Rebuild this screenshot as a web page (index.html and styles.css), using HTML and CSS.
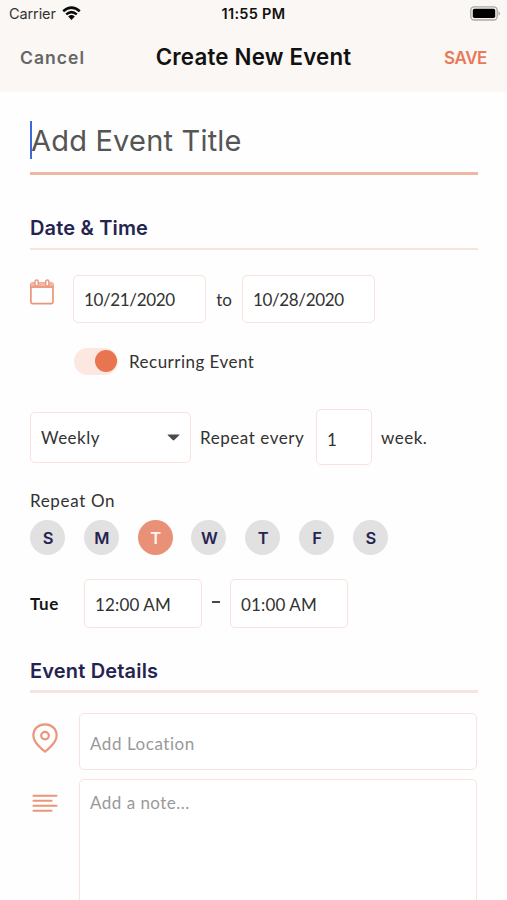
FILE: index.html
```html
<!DOCTYPE html>
<html lang="en">
<head>
<meta charset="utf-8">
<meta name="viewport" content="width=device-width, initial-scale=1">
<title>Create New Event</title>
<link rel="stylesheet" href="styles.css">
</head>
<body>
<div class="screen">
  <header class="header">
    <div class="status">
      <div class="carrier"><span class="carrier-name">Carrier</span>
        <svg class="wifi" width="19" height="15" viewBox="0 0 19 15" fill="none" stroke="#090909" stroke-width="2.5"><path d="M1.2 5.2Q9.5-1.9 17.8 5.2M4.2 8.4Q9.5 3.9 14.8 8.4"/><path fill="#090909" stroke="none" d="M6.2 10.4Q9.5 7.6 12.8 10.4L9.5 14Z"/></svg>
      </div>
      <span class="clock">11:55 PM</span>
      <svg class="battery" width="31" height="15" viewBox="0 0 31 15"><rect x=".8" y=".8" width="26.4" height="13.2" rx="3.5" fill="#f5f2ed" stroke="#aaa9a5" stroke-width="1.3"/><rect x="2.8" y="2.7" width="22.4" height="9.4" rx="1.8" fill="#000"/><path d="M28.5 5q3 2.4 0 4.8z" fill="#aaa9a5"/></svg>
    </div>
    <nav class="nav">
      <span class="cancel">Cancel</span>
      <h1 class="nav-title">Create New Event</h1>
      <span class="save">SAVE</span>
    </nav>
  </header>
  <main class="form">
    <div class="title-field"><span class="caret"></span><span class="title-text">Add Event Title</span></div>

    <h2 class="section date-section"><span class="date-heading">Date &amp; Time</span></h2>
    <div class="row date-row">
      <svg class="calendar" width="24" height="26" viewBox="0 0 24 26" fill="none" stroke="#ea967b" stroke-width="1.7"><rect x=".9" y="4" width="22.1" height="20.6" rx="1.5"/><path fill="#f2b8a4" stroke="none" d="M1 4h22v4H1z"/><path d="M1 8.1h22"/><rect x="5" y="1" width="3.2" height="6" rx="1.6" fill="#fff" stroke-width="1.4"/><rect x="15.7" y="1" width="3.2" height="6" rx="1.6" fill="#fff" stroke-width="1.4"/></svg>
      <div class="box date-box"><span class="date-text">10/21/2020</span></div>
      <span class="to">to</span>
      <div class="box date-box"><span class="date-text">10/28/2020</span></div>
    </div>
    <div class="row recurring">
      <span class="toggle"><span class="knob"></span></span>
      <span class="recurring-text">Recurring Event</span>
    </div>
    <div class="row repeat-row">
      <div class="box select"><span class="weekly">Weekly</span><svg width="13" height="7" viewBox="0 0 13 7"><path d="M1 .5h11q.8 0 .2.7L7.3 6q-.8.8-1.6 0L.8 1.2Q.2.5 1 .5z" fill="#4b4b4b"/></svg></div>
      <span class="every">Repeat every</span>
      <div class="box count"><span>1</span></div>
      <span class="week">week.</span>
    </div>
    <div class="repeat-on"><span class="repeat-text">Repeat On</span></div>
    <div class="days">
      <span class="day">S</span><span class="day">M</span><span class="day active">T</span><span class="day">W</span><span class="day">T</span><span class="day">F</span><span class="day">S</span>
    </div>
    <div class="row time-row">
      <span class="tue">Tue</span>
      <div class="box time-box"><span class="time-text">12:00 AM</span></div>
      <span class="dash"></span>
      <div class="box time-box"><span class="time-text">01:00 AM</span></div>
    </div>

    <h2 class="section detail-section"><span class="detail-heading">Event Details</span></h2>
    <div class="detail-row">
      <svg class="pin" width="26" height="30" viewBox="0 0 26 30" fill="none" stroke="#ea967b" stroke-width="2.2"><path d="M13 28.6C10.6 27 1.4 19.6 1.4 12.4 1.4 5.8 6.4 1.3 13 1.3s11.6 4.5 11.6 11.1c0 7.2-9.2 14.6-11.6 16.2z"/><circle cx="13" cy="12.6" r="3.8"/></svg>
      <div class="box location"><span class="location-text">Add Location</span></div>
    </div>
    <div class="detail-row note-row">
      <svg class="lines" width="26" height="19" viewBox="0 0 26 19" stroke="#ea967b" stroke-width="2.1" stroke-linecap="round"><path d="M1.5 1.7h23M1.5 6.7h18M1.5 11.7h23M1.5 16.7h18"/></svg>
      <div class="box note"><span class="note-text">Add a note...</span></div>
    </div>
  </main>
</div>
</body>
</html>
```

FILE: styles.css
```css
* { box-sizing: border-box; }
body { margin: 0; background: #fefefe; }
.screen { width: 507px; height: 900px; overflow: hidden; font-family: Lato, "Liberation Sans", sans-serif; font-size: 17px; color: #323232; white-space: nowrap; }
.header { height: 92px; background: #fbf7f4; }
.status { display: grid; grid-template-columns: 1fr auto 1fr; align-items: center; height: 27px; padding: 0 6px 0 9px; font: 14.5px Inter, sans-serif; }
.carrier { display: flex; align-items: center; gap: 6px; }
.carrier-name { letter-spacing: -.1px; }
.clock { margin-left: -3px; color: #111; font-weight: 600; letter-spacing: .3px; }
.battery { justify-self: end; }
.nav { display: grid; grid-template-columns: 1fr auto 1fr; align-items: center; height: 60px; padding: 0 20px; font-family: Inter, sans-serif; }
.nav-title { margin: 0; color: #111; font-size: 22.3px; font-weight: 600; line-height: 30px; letter-spacing: .2px; }
.cancel { padding-top: 1px; color: #666; font-size: 17.5px; font-weight: 600; letter-spacing: 1.05px; }
.save { justify-self: end; padding-top: 1px; color: #e7795a; font-size: 17px; font-weight: 600; letter-spacing: -.4px; }
.form { padding: 0 29px 0 30px; }
.title-field { display: flex; align-items: center; height: 83px; padding-top: 16px; border-bottom: 3px solid #edb7a4; color: #555; font: 29px Inter, sans-serif; }
.title-text { letter-spacing: .2px; }
.caret { width: 2px; height: 38px; margin-right: -1px; background: #3e68db; }
.section { display: flex; align-items: flex-end; margin: 0; color: #252450; font: 600 20px/30px Inter, sans-serif; letter-spacing: .17px; }
.date-section { height: 75px; padding-bottom: 5px; border-bottom: 2px solid #f9e2da; }
.row { display: flex; align-items: center; }
.box { display: flex; align-items: center; flex: none; border: 1px solid #fae2de; border-radius: 5px; background: #fff; }
.date-row { height: 49px; margin-top: 24px; }
.calendar { margin: -14px 19px 0 0; }
.date-box { width: 133px; height: 48px; padding: 2px 0 0 10px; }
.date-text { letter-spacing: -.35px; }
.to { width: 36px; padding-top: 1px; text-align: center; }
.recurring { height: 28px; margin-top: 24px; padding-left: 44px; gap: 11px; }
.recurring-text { letter-spacing: .48px; }
.toggle { display: flex; align-items: center; justify-content: flex-end; width: 44px; height: 27px; padding-right: 1px; border-radius: 14px; background: #fce8e1; }
.knob { width: 22px; height: 22px; border-radius: 50%; background: #e97450; }
.repeat-row { height: 56px; margin-top: 34px; }
.select { width: 161px; height: 51px; padding: 0 10px; justify-content: space-between; }
.weekly { letter-spacing: .5px; }
.every { width: 125px; padding-left: 9px; letter-spacing: .57px; }
.count { width: 56px; height: 56px; padding: 4px 0 0 10px; }
.week { padding-left: 9px; letter-spacing: .5px; }
.repeat-on { height: 26px; margin-top: 23px; line-height: 26px; letter-spacing: .65px; }
.days { display: flex; gap: 18.8px; margin-top: 6px; }
.day { display: grid; place-items: center; width: 35px; height: 35px; padding: 1px 0 0 1px; border-radius: 50%; background: #e1e1e1; color: #27254f; font: 600 16.5px Inter, sans-serif; }
.active { background: #e99177; color: #fff4ef; }
.time-row { height: 49px; margin-top: 24px; }
.tue { width: 54px; color: #161616; font-weight: 700; letter-spacing: .5px; }
.time-box { width: 118px; height: 49px; padding: 1px 0 0 10px; }
.time-text { letter-spacing: .15px; }
.dash { width: 8px; height: 2px; margin: -3px 10px 0; background: #494949; }
.detail-section { height: 65px; padding-bottom: 4px; border-bottom: 3px solid #f9e4dd; }
.detail-row { display: flex; align-items: flex-start; padding-left: 2px; margin-top: 20px; }
.pin { margin: 10px 21px 0 0; }
.location { width: 398px; height: 57px; padding: 4px 0 0 10px; color: #999; letter-spacing: .55px; }
.note-row { margin-top: 9px; }
.lines { margin: 15px 21px 0 0; }
.note { align-items: flex-start; width: 398px; height: 150px; padding: 13px 0 0 10px; color: #999; line-height: 20px; letter-spacing: .48px; }
```
